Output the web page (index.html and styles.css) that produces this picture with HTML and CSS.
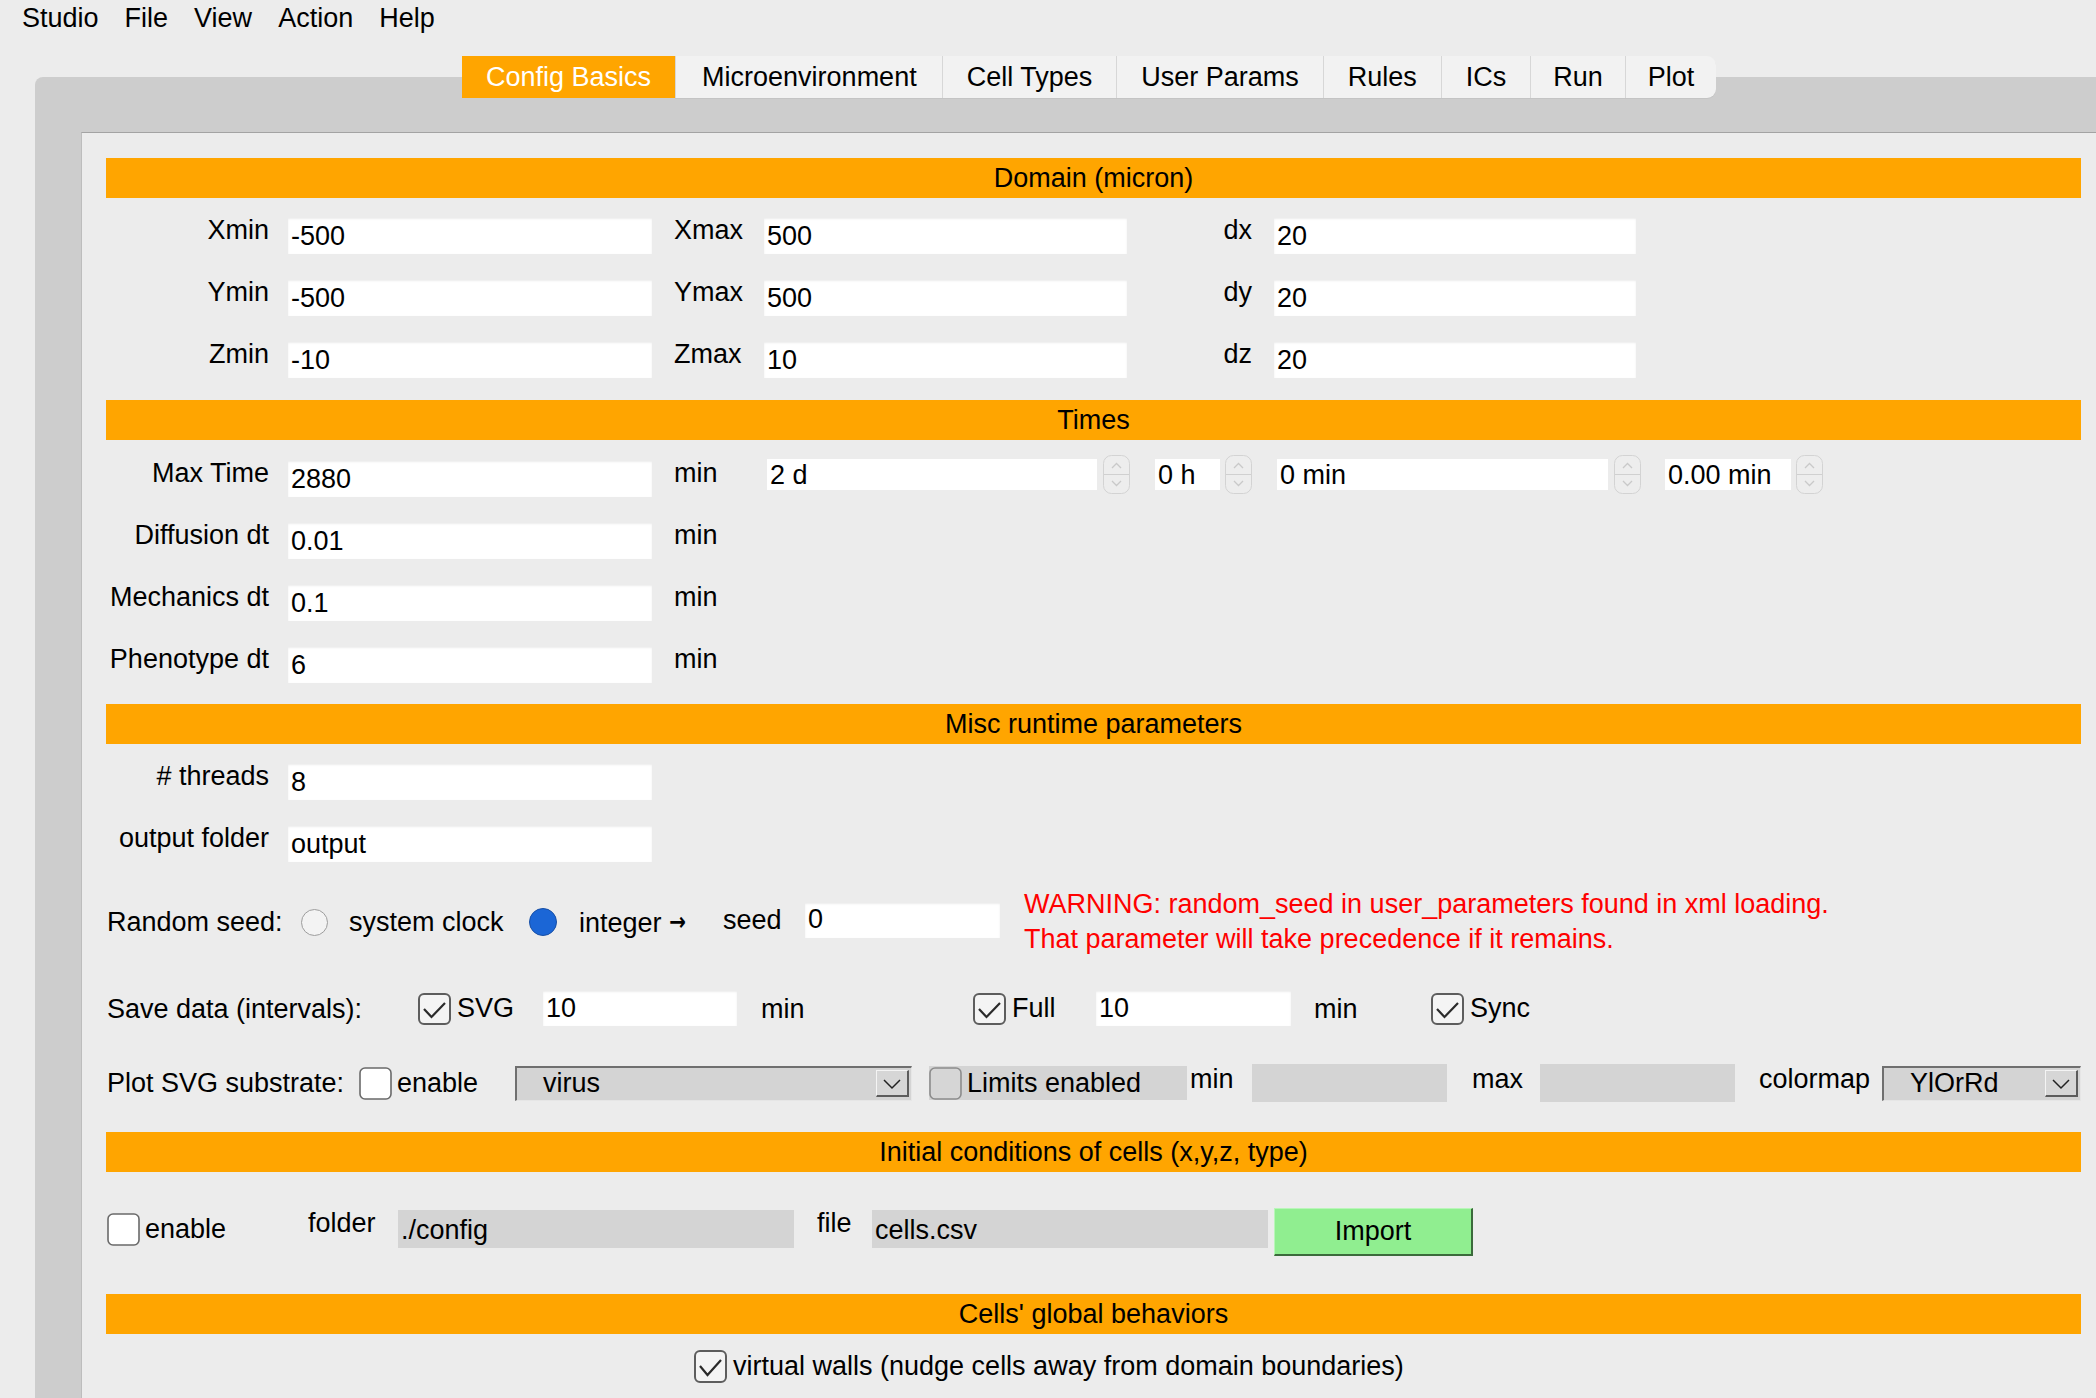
FILE: index.html
```html
<!DOCTYPE html>
<html lang="en">
<head>
<meta charset="utf-8">
<title>Studio - Config Basics</title>
<link rel="stylesheet" href="styles.css">
</head>
<body>
<div class="menubar">
  <span>Studio</span><span>File</span><span>View</span><span>Action</span><span>Help</span>
</div>

<div class="tabs">
  <div class="tab active">Config Basics</div>
  <div class="tab wide">Microenvironment</div>
  <div class="tab">Cell Types</div>
  <div class="tab">User Params</div>
  <div class="tab">Rules</div>
  <div class="tab">ICs</div>
  <div class="tab tight">Run</div>
  <div class="tab tight">Plot</div>
</div>

<div class="pane">
  <div class="content">

    <div class="bar">Domain (micron)</div>
    <div class="rows first">
      <div class="row">
        <div class="lbl c1">Xmin</div><div class="field w364">-500</div>
        <div class="lbl c2">Xmax</div><div class="field w363">500</div>
        <div class="lbl c3">dx</div><div class="field w362">20</div>
      </div>
      <div class="row">
        <div class="lbl c1">Ymin</div><div class="field w364">-500</div>
        <div class="lbl c2">Ymax</div><div class="field w363">500</div>
        <div class="lbl c3">dy</div><div class="field w362">20</div>
      </div>
      <div class="row">
        <div class="lbl c1">Zmin</div><div class="field w364">-10</div>
        <div class="lbl c2">Zmax</div><div class="field w363">10</div>
        <div class="lbl c3">dz</div><div class="field w362">20</div>
      </div>
    </div>

    <div class="bar gap22">Times</div>
    <div class="rows t21">
      <div class="row">
        <div class="lbl c1">Max Time</div><div class="field w364">2880</div>
        <div class="lbl cmin">min</div>
        <div class="timegroup">
          <div class="tfield tw330">2 d</div>
          <svg class="spin sp6" width="27" height="39" viewBox="0 0 27 39"><rect x="0.5" y="0.5" width="26" height="38" rx="8" fill="#ededed" stroke="#d3d3d3"/><line x1="1" y1="19.5" x2="26" y2="19.5" stroke="#d0d0d0"/><polyline points="9,13 13.5,8.5 18,13" fill="none" stroke="#c9c9c9" stroke-width="1.3"/><polyline points="9,26 13.5,30.5 18,26" fill="none" stroke="#c9c9c9" stroke-width="1.3"/></svg>
          <div class="tfield tw65 m25">0 h</div>
          <svg class="spin sp5" width="27" height="39" viewBox="0 0 27 39"><rect x="0.5" y="0.5" width="26" height="38" rx="8" fill="#ededed" stroke="#d3d3d3"/><line x1="1" y1="19.5" x2="26" y2="19.5" stroke="#d0d0d0"/><polyline points="9,13 13.5,8.5 18,13" fill="none" stroke="#c9c9c9" stroke-width="1.3"/><polyline points="9,26 13.5,30.5 18,26" fill="none" stroke="#c9c9c9" stroke-width="1.3"/></svg>
          <div class="tfield tw331 m25">0 min</div>
          <svg class="spin sp6" width="27" height="39" viewBox="0 0 27 39"><rect x="0.5" y="0.5" width="26" height="38" rx="8" fill="#ededed" stroke="#d3d3d3"/><line x1="1" y1="19.5" x2="26" y2="19.5" stroke="#d0d0d0"/><polyline points="9,13 13.5,8.5 18,13" fill="none" stroke="#c9c9c9" stroke-width="1.3"/><polyline points="9,26 13.5,30.5 18,26" fill="none" stroke="#c9c9c9" stroke-width="1.3"/></svg>
          <div class="tfield tw126 m24">0.00 min</div>
          <svg class="spin sp5" width="27" height="39" viewBox="0 0 27 39"><rect x="0.5" y="0.5" width="26" height="38" rx="8" fill="#ededed" stroke="#d3d3d3"/><line x1="1" y1="19.5" x2="26" y2="19.5" stroke="#d0d0d0"/><polyline points="9,13 13.5,8.5 18,13" fill="none" stroke="#c9c9c9" stroke-width="1.3"/><polyline points="9,26 13.5,30.5 18,26" fill="none" stroke="#c9c9c9" stroke-width="1.3"/></svg>
        </div>
      </div>
      <div class="row">
        <div class="lbl c1">Diffusion dt</div><div class="field w364">0.01</div>
        <div class="lbl cmin">min</div>
      </div>
      <div class="row">
        <div class="lbl c1">Mechanics dt</div><div class="field w364">0.1</div>
        <div class="lbl cmin">min</div>
      </div>
      <div class="row">
        <div class="lbl c1">Phenotype dt</div><div class="field w364">6</div>
        <div class="lbl cmin">min</div>
      </div>
    </div>

    <div class="bar gap21">Misc runtime parameters</div>
    <div class="rows first">
      <div class="row">
        <div class="lbl c1"># threads</div><div class="field w364">8</div>
      </div>
      <div class="row">
        <div class="lbl c1">output folder</div><div class="field w364">output</div>
      </div>
    </div>

    <div class="seedrow">
      <div class="txt rs-label">Random seed:</div>
      <span class="radio"></span>
      <div class="txt rs-clock">system clock</div>
      <span class="radio on"></span>
      <div class="txt rs-int">integer <span class="arrow">→</span></div>
      <div class="txt rs-seed">seed</div>
      <div class="field w195">0</div>
      <div class="warning">WARNING: random_seed in user_parameters found in xml loading.<br>That parameter will take precedence if it remains.</div>
    </div>

    <div class="saverow">
      <div class="txt sv-label">Save data (intervals):</div>
      <div class="check sv-svg">
        <svg width="33" height="32" viewBox="0 0 33 32"><rect x="1" y="1" width="31" height="30" rx="5" fill="#f4f4f4" stroke="#5d5d5d" stroke-width="2"/><polyline points="6,16 13.5,24 27,10" fill="none" stroke="#2b2b2b" stroke-width="2.2"/></svg>
        <span>SVG</span>
      </div>
      <div class="field w194 h35">10</div>
      <div class="txt sv-min1">min</div>
      <div class="check sv-full">
        <svg width="33" height="32" viewBox="0 0 33 32"><rect x="1" y="1" width="31" height="30" rx="5" fill="#f4f4f4" stroke="#5d5d5d" stroke-width="2"/><polyline points="6,16 13.5,24 27,10" fill="none" stroke="#2b2b2b" stroke-width="2.2"/></svg>
        <span>Full</span>
      </div>
      <div class="field w195 h35">10</div>
      <div class="txt sv-min2">min</div>
      <div class="check">
        <svg width="33" height="32" viewBox="0 0 33 32"><rect x="1" y="1" width="31" height="30" rx="5" fill="#f4f4f4" stroke="#5d5d5d" stroke-width="2"/><polyline points="6,16 13.5,24 27,10" fill="none" stroke="#2b2b2b" stroke-width="2.2"/></svg>
        <span>Sync</span>
      </div>
    </div>

    <div class="plotrow">
      <div class="txt pl-label">Plot SVG substrate:</div>
      <div class="check pl-enable">
        <svg width="33" height="33" viewBox="0 0 33 33"><rect x="1" y="1" width="31" height="31" rx="5" fill="#ffffff" stroke="#6a6a6a" stroke-width="1.6"/></svg>
        <span>enable</span>
      </div>
      <div class="combo cw397">
        <span>virus</span>
        <span class="drop"><svg width="30" height="24" viewBox="0 0 30 24"><polyline points="7,9 15,17 23,9" fill="none" stroke="#222" stroke-width="1.5"/></svg></span>
      </div>
      <div class="limits">
        <svg width="33" height="33" viewBox="0 0 33 33"><rect x="1" y="1" width="31" height="31" rx="5" fill="#d6d6d6" stroke="#8c8c8c" stroke-width="1.6"/></svg>
        <span>Limits enabled</span>
      </div>
      <div class="lbl pl-min">min</div>
      <div class="field dis w195 h38"></div>
      <div class="lbl pl-max">max</div>
      <div class="field dis w195 h38"></div>
      <div class="lbl pl-cmap">colormap</div>
      <div class="combo cw199">
        <span>YlOrRd</span>
        <span class="drop"><svg width="30" height="24" viewBox="0 0 30 24"><polyline points="7,9 15,17 23,9" fill="none" stroke="#222" stroke-width="1.5"/></svg></span>
      </div>
    </div>

    <div class="bar gap30">Initial conditions of cells (x,y,z, type)</div>
    <div class="icrow">
      <div class="check ic-enable">
        <svg width="33" height="33" viewBox="0 0 33 33"><rect x="1" y="1" width="31" height="31" rx="5" fill="#ffffff" stroke="#6a6a6a" stroke-width="1.6"/></svg>
        <span>enable</span>
      </div>
      <div class="lbl ic-folder">folder</div>
      <div class="field dis w396 h38 up">./config</div>
      <div class="lbl ic-file">file</div>
      <div class="field dis w396 h38 up">cells.csv</div>
      <button class="import" type="button">Import</button>
    </div>

    <div class="bar gap38">Cells' global behaviors</div>
    <div class="wallrow">
      <div class="check">
        <svg width="33" height="33" viewBox="0 0 33 33"><rect x="1" y="1" width="31" height="31" rx="5" fill="#f4f4f4" stroke="#5d5d5d" stroke-width="2"/><polyline points="6,16 13.5,25 27,10" fill="none" stroke="#2b2b2b" stroke-width="2.2"/></svg>
        <span>virtual walls (nudge cells away from domain boundaries)</span>
      </div>
    </div>

  </div>
</div>
</body>
</html>
```

FILE: styles.css
```css
* { box-sizing: border-box; }

html, body {
  margin: 0;
  height: 1398px;
  overflow: hidden;
}

body {
  width: 2096px;
  background: #ececec;
  color: #000;
  font-family: "Liberation Sans", Arial, sans-serif;
  font-size: 27px;
}

/* menu bar */
.menubar {
  display: flex;
  gap: 26px;
  height: 36px;
  line-height: 36px;
  padding-left: 22px;
}

/* tabs */
.tabs {
  display: flex;
  width: max-content;
  height: 42px;
  margin: 20px 0 0 462px;
  position: relative;
  z-index: 1;
}
.tab {
  padding: 0 24px;
  line-height: 42px;
  background: #f2f2f2;
  border-left: 1px solid #d7d7d7;
  box-shadow: 0 1px 0 #c4c4c4;
  white-space: nowrap;
}
.tab.wide { padding: 0 25px 0 26px; }
.tab.tight { padding: 0 22px; }
.tab:first-child { border-left: none; }
.tab.active { background: #ffa500; color: #fff; box-shadow: none; }
.tab:last-child { border-radius: 0 9px 9px 0; }

/* tab pane */
.pane {
  margin: -21px 0 0 35px;
  height: 1340px;
  padding: 55px 0 0 46px;
  background: #cdcdcd;
  border-radius: 8px 0 0 0;
}
.content {
  height: 100%;
  padding: 25px 15px 0 24px;
  background: #ececec;
  border-top: 1px solid #a3a3a3;
  border-left: 1px solid #bdbdbd;
}

/* section bars */
.bar {
  height: 40px;
  line-height: 40px;
  text-align: center;
  background: #ffa500;
  white-space: nowrap;
}
.gap22 { margin-top: 22px; }
.gap21 { margin-top: 21px; }
.gap30 { margin-top: 30px; }
.gap38 { margin-top: 38px; }

/* label / field rows */
.rows {
  display: flex;
  flex-direction: column;
  gap: 26px;
}
.rows.first { margin-top: 20px; }
.rows.t21 { margin-top: 21px; }

.row {
  display: flex;
  align-items: flex-start;
  height: 36px;
}

.lbl {
  line-height: 30px;
  margin-top: -3px;
  white-space: nowrap;
}
.txt { white-space: nowrap; line-height: 30px; }

.c1 { width: 163px; margin-right: 19px; text-align: right; }
.c2 { width: 90px; margin-left: 22px; }
.c3 { width: 147px; padding-right: 22px; text-align: right; }
.cmin { width: 93px; margin-left: 22px; }

.field {
  height: 36px;
  line-height: 36px;
  padding-left: 3px;
  background: #fff;
  box-shadow: inset 0 1px 2px rgba(0, 0, 0, 0.08);
  white-space: nowrap;
  overflow: hidden;
}
.field.dis { background: #d4d4d4; box-shadow: none; }
.h35 { height: 35px; line-height: 35px; }
.h38 { height: 38px; line-height: 40px; }
.w364 { width: 364px; }
.w363 { width: 363px; }
.w362 { width: 362px; }
.w195 { width: 195px; }
.w194 { width: 194px; }
.w396 { width: 396px; }

/* time spin fields */
.timegroup {
  display: flex;
  align-items: center;
  height: 36px;
  margin-top: -5px;
}
.tfield {
  height: 31px;
  line-height: 32px;
  padding-left: 3px;
  background: #fff;
  white-space: nowrap;
}
.tw330 { width: 330px; }
.tw65 { width: 65px; }
.tw331 { width: 331px; }
.tw126 { width: 126px; }
.m25 { margin-left: 25px; }
.m24 { margin-left: 24px; }
.spin { flex: none; display: block; }
.sp6 { margin-left: 6px; }
.sp5 { margin-left: 5px; }

/* random seed row */
.seedrow {
  display: flex;
  align-items: center;
  height: 70px;
  margin-top: 25px;
  padding-left: 1px;
}
.rs-label { width: 194px; }
.rs-clock { width: 180px; margin-left: 21px; }
.rs-int { width: 144px; margin-left: 22px; }
.arrow {
  display: inline-block;
  font-family: "DejaVu Sans", sans-serif;
  font-size: 25px;
  font-weight: bold;
  vertical-align: 2px;
  transform: scaleX(0.8);
  transform-origin: left center;
}
.rs-seed { width: 82px; margin-top: -4px; }
.seedrow .field { height: 35px; line-height: 33px; margin-top: -3px; }
.radio {
  flex: none;
  width: 27px;
  height: 27px;
  border-radius: 50%;
  background: #f3f3f3;
  border: 1.5px solid #9d9d9d;
}
.radio.on {
  width: 28px;
  height: 28px;
  background: #1b66d6;
  border: 1.5px solid #174fa6;
}
.warning {
  margin-left: 24px;
  color: #ff0000;
  line-height: 35px;
  white-space: nowrap;
}

/* checkbox with caption */
.check {
  display: flex;
  align-items: center;
  gap: 6px;
  white-space: nowrap;
}
.check svg { display: block; flex: none; }

/* save data row */
.saverow {
  display: flex;
  align-items: center;
  height: 35px;
  margin-top: 34px;
  padding-left: 1px;
}
.sv-label { width: 311px; }
.sv-svg { width: 125px; }
.sv-min1 { width: 212px; margin-left: 24px; }
.sv-full { width: 123px; }
.sv-min2 { width: 117px; margin-left: 23px; }

/* plot svg substrate row */
.plotrow {
  display: flex;
  align-items: center;
  height: 38px;
  margin-top: 38px;
  padding-left: 1px;
}
.plotrow .lbl { align-self: flex-start; margin-top: 0; }
.pl-label { width: 252px; }
.pl-enable { width: 156px; gap: 5px; }
.pl-min { width: 62px; margin-left: 3px; }
.pl-max { width: 68px; margin-left: 25px; }
.pl-cmap { width: 123px; margin-left: 24px; }

.combo {
  display: flex;
  align-items: center;
  justify-content: space-between;
  height: 35px;
  padding-left: 26px;
  padding-right: 2px;
  background: #d4d4d4;
  border-top: 2px solid #6f6f6f;
  border-left: 2px solid #6f6f6f;
  border-right: 1px solid #e6e6e6;
  border-bottom: 1px solid #e6e6e6;
  white-space: nowrap;
}
.cw397 { width: 397px; }
.cw199 { width: 199px; }
.drop {
  display: block;
  width: 33px;
  height: 27px;
  background: #d6d6d6;
  border-top: 1px solid #f4f4f4;
  border-left: 1px solid #f4f4f4;
  border-right: 2px solid #5c5c5c;
  border-bottom: 2px solid #5c5c5c;
}
.drop svg { display: block; }

.limits {
  display: flex;
  align-items: center;
  gap: 5px;
  width: 258px;
  height: 34px;
  margin-left: 17px;
  background: #d4d4d4;
  white-space: nowrap;
}
.limits svg { display: block; flex: none; }

/* initial conditions row */
.icrow {
  display: flex;
  align-items: center;
  height: 48px;
  margin-top: 36px;
  padding-left: 1px;
}
.ic-enable { width: 201px; gap: 5px; margin-bottom: 6px; }
.ic-folder { width: 90px; margin: 0 0 18px 0; }
.ic-file { width: 55px; margin: 0 0 18px 23px; }
.up { margin-bottom: 6px; }
.import {
  width: 199px;
  height: 48px;
  margin-left: 6px;
  padding: 0;
  font: inherit;
  color: #000;
  background: #90ee90;
  border-top: 1px solid #b9f6b9;
  border-left: 1px solid #b9f6b9;
  border-right: 2px solid #3b6a3b;
  border-bottom: 2px solid #3b6a3b;
  border-radius: 0;
  line-height: 45px;
}

/* virtual walls row */
.wallrow {
  display: flex;
  margin-top: 16px;
  padding-left: 588px;
}
```
